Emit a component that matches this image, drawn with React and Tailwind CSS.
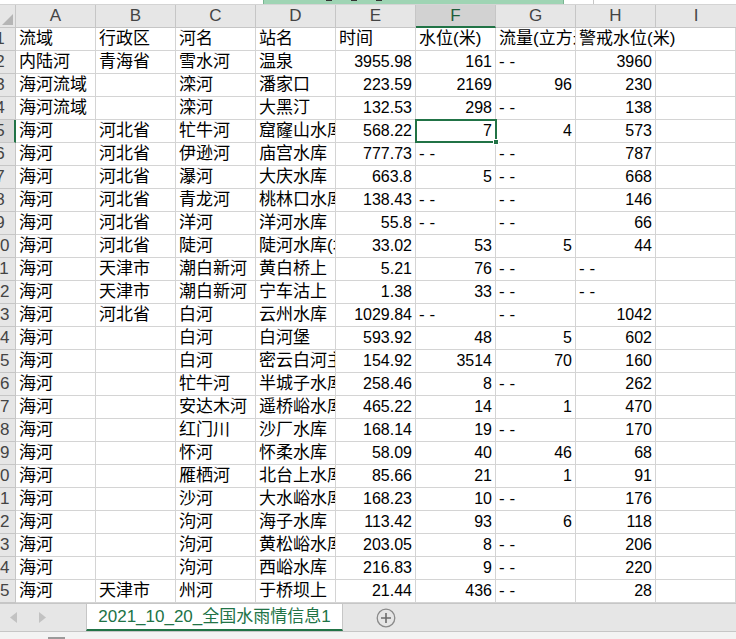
const COLS = ['A', 'B', 'C', 'D', 'E', 'F', 'G', 'H', 'I'];

const D = '--';
const rows = [
  ['流域', '行政区', '河名', '站名', '时间', '水位(米)', '流量(立方米/秒)', '警戒水位(米)'],
  ['内陆河', '青海省', '雪水河', '温泉', 3955.98, 161, D, 3960],
  ['海河流域', '', '滦河', '潘家口', 223.59, 2169, 96, 230],
  ['海河流域', '', '滦河', '大黑汀', 132.53, 298, D, 138],
  ['海河', '河北省', '牤牛河', '窟窿山水库', 568.22, 7, 4, 573],
  ['海河', '河北省', '伊逊河', '庙宫水库', 777.73, D, D, 787],
  ['海河', '河北省', '瀑河', '大庆水库', 663.8, 5, D, 668],
  ['海河', '河北省', '青龙河', '桃林口水库', 138.43, D, D, 146],
  ['海河', '河北省', '洋河', '洋河水库', 55.8, D, D, 66],
  ['海河', '河北省', '陡河', '陡河水库(坝上)', 33.02, 53, 5, 44],
  ['海河', '天津市', '潮白新河', '黄白桥上', 5.21, 76, D, D],
  ['海河', '天津市', '潮白新河', '宁车沽上', 1.38, 33, D, D],
  ['海河', '河北省', '白河', '云州水库', 1029.84, D, D, 1042],
  ['海河', '', '白河', '白河堡', 593.92, 48, 5, 602],
  ['海河', '', '白河', '密云白河主坝', 154.92, 3514, 70, 160],
  ['海河', '', '牤牛河', '半城子水库', 258.46, 8, D, 262],
  ['海河', '', '安达木河', '遥桥峪水库', 465.22, 14, 1, 470],
  ['海河', '', '红门川', '沙厂水库', 168.14, 19, D, 170],
  ['海河', '', '怀河', '怀柔水库', 58.09, 40, 46, 68],
  ['海河', '', '雁栖河', '北台上水库', 85.66, 21, 1, 91],
  ['海河', '', '沙河', '大水峪水库', 168.23, 10, D, 176],
  ['海河', '', '泃河', '海子水库', 113.42, 93, 6, 118],
  ['海河', '', '泃河', '黄松峪水库', 203.05, 8, D, 206],
  ['海河', '', '泃河', '西峪水库', 216.83, 9, D, 220],
  ['海河', '天津市', '州河', '于桥坝上', 21.44, 436, D, 28],
];

function Cell({ value, last, overflow }) {
  const isNum = typeof value === 'number';
  const text = value === D ? '- -' : value;
  return (
    <div
      className={`h-[23px] shrink-0 border-b border-[#d4d4d4] leading-[22px] whitespace-nowrap ${
        last ? 'flex-1' : 'w-[80px]'
      } ${overflow ? 'overflow-visible relative z-10' : 'overflow-hidden border-r'} ${
        isNum ? 'text-right pr-[3px] text-[16px]' : 'text-left pl-[3px] text-[17px]'
      }`}
    >
      {text}
    </div>
  );
}

export default function App() {
  return (
    <div
      className="w-[736px] h-[639px] overflow-hidden bg-white text-black flex flex-col"
      style={{ fontFamily: '"Liberation Sans", "Noto Sans CJK SC", sans-serif' }}
    >
      {/* remnant of the ribbon above */}
      <div className="h-[5px] shrink-0 flex border-b border-[#d4d4d4]">
        <div className="w-[263px]" />
        <div className="w-[301px] bg-[#9fd4b4] border-x border-[#7ab592] flex items-start gap-[19px] pl-[62px]">
          <span className="w-[6px] h-[1px] bg-[#333]" />
          <span className="w-[6px] h-[1px] bg-[#333]" />
          <span className="w-[6px] h-[1px] bg-[#333]" />
        </div>
        <div className="w-[30px] border-r border-[#c6c6c6]" />
      </div>

      {/* column headers */}
      <div className="h-[23px] shrink-0 flex bg-[#e6e6e6] text-[#444] text-[17px] leading-[22px]">
        <div className="relative w-[16px] shrink-0 border-r border-b border-[#c6c6c6]">
          <svg className="absolute right-[2px] bottom-[2px]" width="11" height="11" viewBox="0 0 11 11">
            <polygon points="11,0 11,11 0,11" fill="#b5b5b5" />
          </svg>
        </div>
        {COLS.map((c, i) => (
          <div
            key={c}
            className={`text-center ${i === 8 ? 'flex-1' : 'w-[80px] shrink-0 border-r'} border-[#c6c6c6] ${
              c === 'F' ? 'bg-[#d2d2d2] border-b-2 border-b-[#217346] text-[#1e5e3b]' : 'border-b'
            }`}
          >
            {c}
          </div>
        ))}
      </div>

      {/* rows */}
      <div className="shrink-0">
        {rows.map((r, ri) => {
          const n = ri + 1;
          return (
            <div key={n} className="relative flex">
              <div
                className={`w-[16px] h-[23px] shrink-0 overflow-hidden border-b border-[#c6c6c6] text-[#444] text-[17px] leading-[22px] ${
                  n === 5 ? 'bg-[#dadada] border-r-2 border-r-[#217346]' : 'bg-[#e6e6e6] border-r'
                }`}
              >
                <div className="w-[32px] -ml-[16px] text-center">{n}</div>
              </div>
              {r.map((v, ci) => (
                <Cell key={ci} value={v} overflow={n === 1 && ci === 7} />
              ))}
              <Cell value="" last />
              {n === 5 && (
                <div className="absolute z-20 left-[415px] -top-[1px] w-[82px] h-[24px] border-[2px] border-solid border-[#217346] pointer-events-none">
                  <div className="absolute -right-[4px] -bottom-[4px] w-[6px] h-[6px] bg-[#217346] border border-solid border-white" />
                </div>
              )}
            </div>
          );
        })}
      </div>

      {/* sheet tabs */}
      <div className="h-[29px] shrink-0 flex items-stretch bg-[#e6e6e6] border-t border-[#c6c6c6] border-b border-b-[#c6c6c6]">
        <div className="w-[86px] shrink-0 flex items-center gap-[22px] pl-[10px]">
          <svg width="7" height="11" viewBox="0 0 7 11">
            <polygon points="7,0 7,11 0,5.5" fill="#c2c2c2" />
          </svg>
          <svg width="7" height="11" viewBox="0 0 7 11">
            <polygon points="0,0 0,11 7,5.5" fill="#c2c2c2" />
          </svg>
        </div>
        <div className="w-[257px] shrink-0 bg-white border-x border-[#c6c6c6] border-b-2 border-b-[#217346] text-[#217346] text-[17px] leading-[26px] text-center">
          2021_10_20_全国水雨情信息1
        </div>
        <div className="flex items-center pl-[33px]">
          <svg width="20" height="20" viewBox="0 0 20 20">
            <circle cx="10" cy="10" r="8.8" fill="none" stroke="#8a8a8a" strokeWidth="1.3" />
            <path d="M10 5v10M5 10h10" stroke="#6d6d6d" strokeWidth="1.6" />
          </svg>
        </div>
      </div>

      {/* status bar edge */}
      <div className="flex-1 bg-[#f3f3f3] relative">
        <div className="ml-[48px] mt-[5px] w-[17px] h-[3px] bg-[#9a9a9a]" />
      </div>
    </div>
  );
}
